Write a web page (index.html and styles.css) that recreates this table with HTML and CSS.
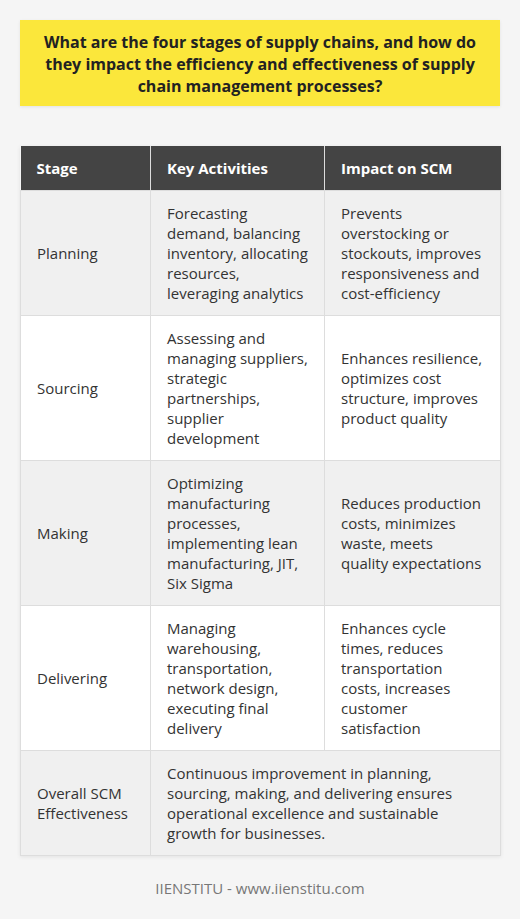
FILE: index.html
```html
<!DOCTYPE html>
<html>
<head>
<meta charset="utf-8">
<link rel="stylesheet" href="styles.css">
</head>
<body>
<div class="page">
  <div class="title">What are the four stages of supply chains, and how do they impact the efficiency and effectiveness of supply chain management processes?</div>
  <table class="tbl">
    <colgroup><col class="c1"><col class="c2"><col class="c3"></colgroup>
    <thead>
      <tr><th>Stage</th><th>Key Activities</th><th>Impact on SCM</th></tr>
    </thead>
    <tbody>
      <tr><td>Planning</td><td>Forecasting demand, balancing inventory, allocating resources, leveraging analytics</td><td>Prevents overstocking or stockouts, improves responsiveness and cost-efficiency</td></tr>
      <tr><td>Sourcing</td><td>Assessing and managing suppliers, strategic partnerships, supplier development</td><td>Enhances resilience, optimizes cost structure, improves product quality</td></tr>
      <tr><td>Making</td><td>Optimizing manufacturing processes, implementing lean manufacturing, JIT, Six Sigma</td><td>Reduces production costs, minimizes waste, meets quality expectations</td></tr>
      <tr><td>Delivering</td><td>Managing warehousing, transportation, network design, executing final delivery</td><td>Enhances cycle times, reduces transportation costs, increases customer satisfaction</td></tr>
      <tr><td>Overall SCM Effectiveness</td><td colspan="2">Continuous improvement in planning, sourcing, making, and delivering ensures operational excellence and sustainable growth for businesses.</td></tr>
    </tbody>
  </table>
  <div class="footer">IIENSTITU - www.iienstitu.com</div>
</div>
</body>
</html>
```
FILE: styles.css
```css
html, body {
  margin: 0;
  padding: 0;
  background: #f5f5f5;
}
body {
  font-family: "Open Sans", "Liberation Sans", sans-serif;
  color: #333;
}
.page {
  padding: 20px;
}
.title {
  background: #fbe73b;
  color: #222;
  font-weight: 700;
  font-size: 16px;
  line-height: 22px;
  text-align: center;
  padding: 11px 20px 9px;
  box-shadow: 0 1px 3px rgba(0,0,0,0.08);
}
.tbl {
  margin-top: 40px;
  width: 480px;
  border-collapse: collapse;
  table-layout: fixed;
  font-size: 15px;
  line-height: 20px;
  box-shadow: 0 1px 4px rgba(0,0,0,0.08);
}
.c1 { width: 130px; }
.c2 { width: 174px; }
.c3 { width: 176px; }
.tbl th {
  background: #444;
  color: #fff;
  font-weight: 700;
  text-align: left;
  padding: 12px 16px 12px 16px;
  border: 1px solid #ddd;
  border-top: none;
}
.tbl th:first-child { border-left: none; }
.tbl th:last-child { border-right: none; }
.tbl td {
  padding: 12px 16px 12px 16px;
  border: 1px solid #ddd;
  vertical-align: middle;
  color: #333;
}
.tbl td:nth-child(2) { padding-right: 14px; }
.tbl td:nth-child(3) { padding-right: 17px; }
.tbl tbody tr:nth-child(odd) td { background: #f0f0f0; }
.tbl tbody tr:nth-child(even) td { background: #fff; }
.footer {
  text-align: center;
  color: #777;
  font-size: 15px;
  margin-top: 22px;
}
```
